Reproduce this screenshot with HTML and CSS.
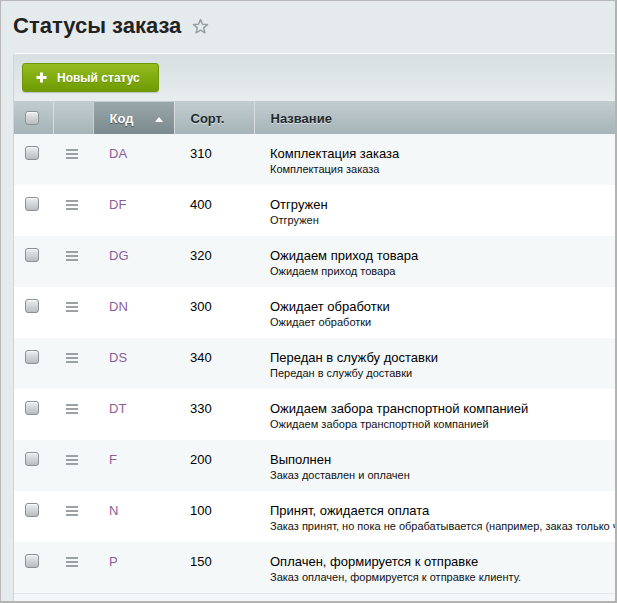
FILE: index.html
```html
<!DOCTYPE html>
<html lang="ru">
<head>
<meta charset="utf-8">
<title>Статусы заказа</title>
<link rel="stylesheet" href="styles.css">
</head>
<body>
<div class="frame">
  <div class="title-row">
    <h1 class="title">Статусы заказа</h1>
    <svg class="star" width="17" height="17" viewBox="0 0 17 17"><path d="M8.5 1.6 L10.5 6.2 L15.5 6.6 L11.7 9.9 L12.9 14.8 L8.5 12.2 L4.1 14.8 L5.3 9.9 L1.5 6.6 L6.5 6.2 Z" fill="none" stroke="#979fa3" stroke-width="1.5" stroke-linejoin="round"/></svg>
  </div>
  <div class="panel">
    <div class="toolbar">
      <button class="btn-add"><svg class="plus" width="11" height="11" viewBox="0 0 11 11"><path d="M5.5 0.5 V10.5 M0.5 5.5 H10.5" stroke="#fff" stroke-width="3"/></svg><span>Новый статус</span></button>
    </div>
    <table class="grid">
      <colgroup>
        <col class="c-check"><col class="c-drag"><col class="c-code"><col class="c-sort"><col class="c-name">
      </colgroup>
      <thead>
        <tr>
          <th class="h-check"><span class="cb"></span></th>
          <th class="h-drag"></th>
          <th class="h-code active"><span>Код</span><span class="arrow"></span></th>
          <th class="h-sort">Сорт.</th>
          <th class="h-name">Название</th>
        </tr>
      </thead>
      <tbody>
        <tr><td class="t-check"><span class="cb"></span></td><td class="t-drag"><span class="drag"></span></td><td class="t-code">DA</td><td class="t-sort">310</td><td class="t-name"><div class="n-main">Комплектация заказа</div><div class="n-sub">Комплектация заказа</div></td></tr>
        <tr><td class="t-check"><span class="cb"></span></td><td class="t-drag"><span class="drag"></span></td><td class="t-code">DF</td><td class="t-sort">400</td><td class="t-name"><div class="n-main">Отгружен</div><div class="n-sub">Отгружен</div></td></tr>
        <tr><td class="t-check"><span class="cb"></span></td><td class="t-drag"><span class="drag"></span></td><td class="t-code">DG</td><td class="t-sort">320</td><td class="t-name"><div class="n-main">Ожидаем приход товара</div><div class="n-sub">Ожидаем приход товара</div></td></tr>
        <tr><td class="t-check"><span class="cb"></span></td><td class="t-drag"><span class="drag"></span></td><td class="t-code">DN</td><td class="t-sort">300</td><td class="t-name"><div class="n-main">Ожидает обработки</div><div class="n-sub">Ожидает обработки</div></td></tr>
        <tr><td class="t-check"><span class="cb"></span></td><td class="t-drag"><span class="drag"></span></td><td class="t-code">DS</td><td class="t-sort">340</td><td class="t-name"><div class="n-main">Передан в службу доставки</div><div class="n-sub">Передан в службу доставки</div></td></tr>
        <tr><td class="t-check"><span class="cb"></span></td><td class="t-drag"><span class="drag"></span></td><td class="t-code">DT</td><td class="t-sort">330</td><td class="t-name"><div class="n-main">Ожидаем забора транспортной компанией</div><div class="n-sub">Ожидаем забора транспортной компанией</div></td></tr>
        <tr><td class="t-check"><span class="cb"></span></td><td class="t-drag"><span class="drag"></span></td><td class="t-code">F</td><td class="t-sort">200</td><td class="t-name"><div class="n-main">Выполнен</div><div class="n-sub">Заказ доставлен и оплачен</div></td></tr>
        <tr><td class="t-check"><span class="cb"></span></td><td class="t-drag"><span class="drag"></span></td><td class="t-code">N</td><td class="t-sort">100</td><td class="t-name"><div class="n-main">Принят, ожидается оплата</div><div class="n-sub">Заказ принят, но пока не обрабатывается (например, заказ только что создан или ожидается оплата заказа)</div></td></tr>
        <tr><td class="t-check"><span class="cb"></span></td><td class="t-drag"><span class="drag"></span></td><td class="t-code">P</td><td class="t-sort">150</td><td class="t-name"><div class="n-main">Оплачен, формируется к отправке</div><div class="n-sub">Заказ оплачен, формируется к отправке клиенту.</div></td></tr>
      </tbody>
    </table>
    <div class="footer"></div>
  </div>
</div>
</body>
</html>
```

FILE: styles.css
```css
html, body {
  margin: 0;
  padding: 0;
  background: #fff;
}
.frame {
  box-sizing: border-box;
  width: 617px;
  height: 603px;
  border-top: 1px solid #b8b8b8;
  border-left: 1px solid #b8b8b8;
  border-right: 2px solid #b3b3b3;
  border-bottom: 2px solid #b3b3b3;
  background: #e5ebed;
  overflow: hidden;
  font-family: "Liberation Sans", Arial, sans-serif;
  color: #000;
}
.title-row {
  display: flex;
  align-items: center;
  padding: 13px 0 0 12px;
  height: 24px;
}
.title {
  margin: 0;
  font-size: 22px;
  line-height: 24px;
  font-weight: bold;
  color: #222;
}
.star {
  margin-left: 11px;
  margin-top: 1px;
}
.panel {
  margin-top: 15px;
  margin-left: 12px;
  border-left: 1px solid #cdd5d8;
  border-top: 1px solid #fafcfc;
  border-top-left-radius: 4px;
  background: linear-gradient(#d7dfe1, #e8edef 48px);
}
.toolbar {
  padding: 9px 0 9px 8px;
  border-bottom: 1px solid #c2cccf;
}
.btn-add {
  display: flex;
  align-items: center;
  width: 137px;
  height: 29px;
  padding: 0 0 0 13px;
  box-sizing: border-box;
  border: 1px solid #6f9604;
  border-radius: 3px;
  background: linear-gradient(#93bd1f, #6f9b03);
  box-shadow: 0 1px 1px rgba(0,0,0,0.18);
  color: #fff;
  font-family: "Liberation Sans", Arial, sans-serif;
  font-size: 12px;
  font-weight: bold;
  text-shadow: 0 1px 0 rgba(60,80,0,0.35);
}
.plus {
  margin-right: 10px;
}
.grid {
  border-collapse: collapse;
  table-layout: fixed;
  width: 800px;
}
.c-check { width: 39px; }
.c-drag { width: 40px; }
.c-code { width: 81px; }
.c-sort { width: 80px; }
.c-name { width: 560px; }
.grid th {
  height: 32px;
  padding: 0 0 0 16px;
  box-sizing: border-box;
  text-align: left;
  font-size: 13px;
  font-weight: bold;
  color: #1f2a2d;
  text-shadow: 0 1px 0 rgba(255,255,255,0.55);
  background: linear-gradient(#c0cbce, #a6b4b7);
  border-left: 1px solid #d6dee0;
  vertical-align: middle;
}
.grid th.h-check {
  border-left: none;
  padding: 0 0 0 11px;
}
.grid th.h-code {
  padding-left: 16px;
}
.grid th.active {
  background: linear-gradient(#9aa7aa, #7b8a8e);
  color: #fff;
  text-shadow: 0 1px 1px rgba(0,0,0,0.5);
  border-left-color: #c8d0d3;
}
.arrow {
  display: inline-block;
  width: 0;
  height: 0;
  margin-left: 22px;
  vertical-align: 1px;
  border-left: 4px solid transparent;
  border-right: 4px solid transparent;
  border-bottom: 5px solid #fff;
}
.cb {
  display: block;
  width: 14px;
  height: 14px;
  box-sizing: border-box;
  border: 1px solid #8a9093;
  border-radius: 3px;
  background: linear-gradient(#eceeef, #b9bdbf);
  box-shadow: inset 0 1px 0 rgba(255,255,255,0.7);
}
.grid td {
  height: 51px;
  box-sizing: border-box;
  padding: 12px 0 0 16px;
  vertical-align: top;
  font-size: 13px;
  line-height: 16px;
  white-space: nowrap;
  overflow: hidden;
}
.grid tbody tr:nth-child(odd) td {
  background: #f5f8f9;
}
.grid tbody tr:nth-child(even) td {
  background: #fff;
}
.grid td.t-check {
  padding: 12px 0 0 11px;
}
.grid td.t-drag {
  padding: 15px 0 0 13px;
}
.drag {
  display: block;
  width: 12px;
  height: 10px;
  background: linear-gradient(#9aa2a5 0 2px, transparent 2px 4px, #9aa2a5 4px 6px, transparent 6px 8px, #9aa2a5 8px 10px);
}
.grid td.t-code {
  padding-left: 16px;
  color: #8b5e9b;
}
.n-main {
  font-size: 13px;
  line-height: 16px;
}
.n-sub {
  font-size: 11px;
  line-height: 15px;
  color: #111;
}
.footer {
  height: 7px;
  border-top: 1px solid #e3e9eb;
  background: #f4f7f8;
}
```
